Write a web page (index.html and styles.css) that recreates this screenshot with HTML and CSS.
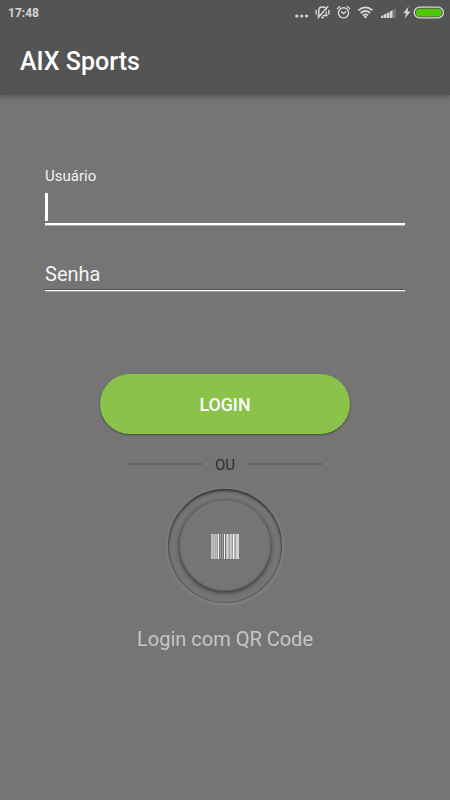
FILE: index.html
```html
<!DOCTYPE html>
<html lang="pt-BR">
<head>
<meta charset="utf-8">
<meta name="viewport" content="width=device-width, initial-scale=1">
<title>AIX Sports</title>
<link rel="stylesheet" href="styles.css">
</head>
<body>
<header class="header">
  <div class="status">
    <span class="clock">17:48</span>
    <svg class="status-icons" width="152" height="26" viewBox="295 0 152 26" fill="none" stroke="#d6d6d6">
      <g fill="#d6d6d6" stroke="none"><circle cx="296.8" cy="16" r="1.6"/><circle cx="301.7" cy="16" r="1.6"/><circle cx="306.6" cy="16" r="1.6"/></g>
      <path stroke-width="1.5" d="M317.6 15.4h10M318.8 15V10.2q0-3.2 3.7-3.2q3.7 0 3.7 3.2v5M321 17.5h3M316.2 10v4.5M328.9 10v4.5"/>
      <path stroke="#545454" stroke-width="1.2" d="M319 18.8L329.2 7.4"/>
      <path stroke-width="1.4" d="M317.6 18.3L328.2 6.3"/>
      <circle cx="343.5" cy="12.8" r="5.1" stroke-width="1.4"/>
      <path stroke-width="1.3" d="M341 11.4l2.5 2.2l2.6-2.2M337 9l3-2.7M350 9l-3-2.7"/>
      <path stroke-width="1.8" d="M358.3 10.4q7.1-6 14.2 0M360.6 13q4.8-4 9.6 0M362.8 15.5q2.6-2.2 5.2 0"/>
      <circle cx="365.4" cy="17" r="1.3" fill="#d6d6d6" stroke="none"/>
      <g fill="#d6d6d6" stroke="none"><path d="M381 18v-2l2.5-1v3zM384 18v-3.4l2.5-1V18zM387 18v-4.8l2.5-1.3v6.1zM390 18v-6.5l2.6-1.5V18z"/><path fill="#777" d="M393.2 18V9.7l2.6-1.7V18z"/><path d="M408.5 6.5l-5.3 6.7h3l-1.4 5.4l5.8-7.2h-3.1z"/></g>
      <rect x="414.2" y="7.2" width="29.2" height="10.6" rx="5.3" stroke-width="1.3"/>
      <rect x="415.8" y="8.8" width="26" height="7.6" rx="3.7" fill="#4bc703" stroke="none"/>
    </svg>
  </div>
  <h1 class="title">AIX Sports</h1>
</header>
<main class="content">
  <div class="field field-active">
    <label class="small-label">Usuário</label>
    <div class="caret"></div>
  </div>
  <div class="field field-password">Senha</div>
  <button class="login" type="button">LOGIN</button>
  <div class="divider"><span class="line"></span><span class="or">OU</span><span class="line"></span></div>
  <div class="ring">
    <div class="disc">
      <svg width="28" height="25" viewBox="0 0 28 25" shape-rendering="crispEdges">
        <path fill="#bdbdbd" d="M0 0h6v25H0zM15 0h13v25H15z"/>
        <path fill="#9c9c9c" d="M6 0h1v25H6zM9 0h1v25H9zM11 0h1v25h-1zM18 0h1v25h-1zM21 0h1v25h-1zM24 0h1v25h-1z"/>
        <path fill="#adadad" d="M2 0h1v25H2zM4 0h1v25H4z"/>
        <path fill="#f2f2f2" d="M7 0h1v25H7zM13 0h1v25h-1zM22 0h1v25h-1z"/>
        <path fill="#d2d2d2" d="M16 0h1v25h-1zM19 0h1v25h-1zM25 0h3v25h-3z"/>
      </svg>
    </div>
  </div>
  <p class="qr-text">Login com QR Code</p>
</main>
</body>
</html>
```
FILE: styles.css
```css
* { box-sizing: border-box; }
body {
  margin: 0;
  height: 800px;
  overflow: hidden;
  background: #757575;
  color: #fff;
  font-family: Roboto, sans-serif;
}
.header {
  height: 95px;
  background: #545454;
  box-shadow: 0 2px 5px rgba(0, 0, 0, .27);
}
.status {
  height: 26px;
  display: flex;
  justify-content: space-between;
  padding: 0 3px 0 8px;
}
.clock {
  font-size: 12px;
  line-height: 26px;
  font-weight: 700;
  color: #d4d4d4;
}
.title {
  margin: 0;
  padding-left: 20px;
  font-size: 25px;
  line-height: 72px;
  font-weight: 500;
}
.content {
  display: flex;
  flex-direction: column;
  align-items: center;
}
.field { width: 360px; }
.field-active {
  height: 58px;
  margin-top: 70px;
  border-bottom: 2px solid #fff;
  box-shadow: 0 1px #aaa;
}
.header + .content .field-active { margin-top: 72px; }
.small-label {
  display: block;
  font-size: 15px;
  line-height: 18px;
  color: #f2f2f2;
}
.caret {
  width: 3px;
  height: 28px;
  margin-top: 8px;
  background: #fff;
}
.field-password {
  height: 33px;
  margin-top: 33px;
  padding-top: 4px;
  border-bottom: 1px solid #fff;
  box-shadow: 0 1px #969696, inset 0 -1px #555;
  color: #f4f4f4;
  font-size: 20px;
  line-height: 24px;
}
.login {
  width: 250px;
  height: 60px;
  margin-top: 83px;
  padding: 1px 0 0;
  border: 0;
  border-radius: 30px;
  background: #8bc34a;
  box-shadow: 0 1px 2px rgba(0, 0, 0, .4);
  color: #fff;
  font: 500 17.8px/59px Roboto, sans-serif;
}
.divider {
  width: 194px;
  height: 22px;
  margin-top: 20px;
  display: flex;
  align-items: center;
  justify-content: space-between;
}
.line {
  width: 74px;
  height: 2px;
  margin-bottom: 2px;
  background: #626262;
}
.or {
  color: #303030;
  font-size: 15px;
  line-height: 22px;
}
.ring {
  width: 114px;
  height: 114px;
  margin-top: 13px;
  border-radius: 50%;
  display: grid;
  place-items: center;
  box-shadow: inset 0 2px 3px rgba(0, 0, 0, .5), inset 0 0 2px rgba(0, 0, 0, .5), 0 1px 5px rgba(255, 255, 255, .16);
}
.disc {
  width: 92px;
  height: 92px;
  border-radius: 50%;
  display: grid;
  place-items: center;
  background: #757575;
  box-shadow: 0 1px 4px rgba(0, 0, 0, .5), inset 0 -1px 2px rgba(0, 0, 0, .5);
}
.qr-text {
  margin: 23px 0 0;
  color: #c6c6c6;
  font-size: 20px;
  line-height: 26px;
}
```
